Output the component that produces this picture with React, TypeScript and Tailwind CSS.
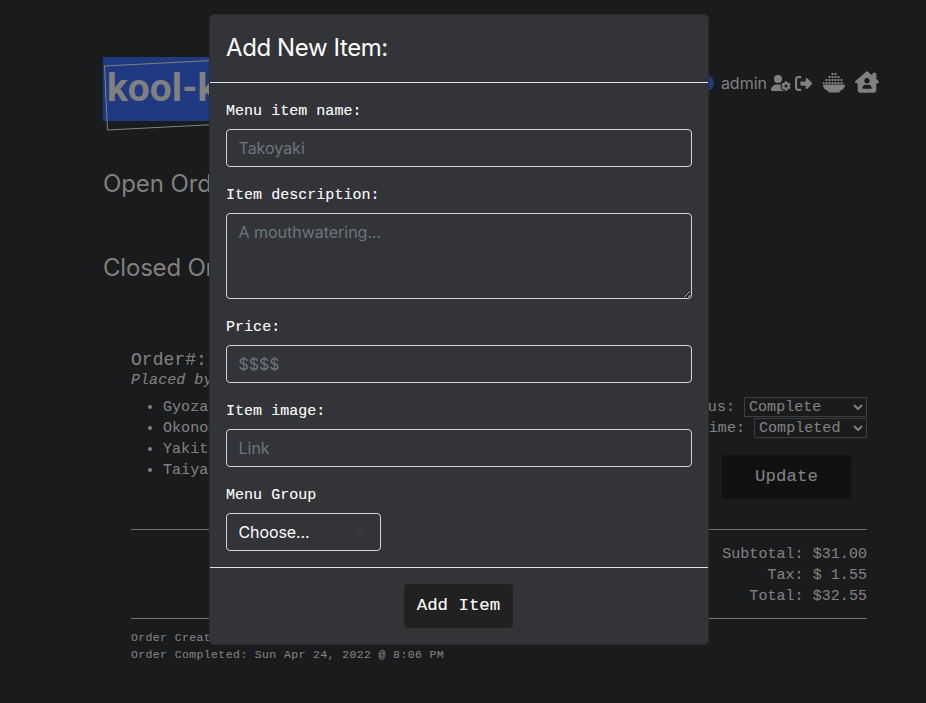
import type { ReactNode } from "react";
import { FaUserGear, FaRightFromBracket, FaHouseChimneyUser } from "react-icons/fa6";

const items = ["Gyoza", "Okonomiyaki", "Yakitori", "Taiyaki"];

// Rice grains above the bowl, one entry per row: top offset and grain count.
const riceRows = [
  { y: 0, count: 2 },
  { y: 3, count: 4 },
  { y: 6, count: 6 },
  { y: 9, count: 7 },
];

function RiceBowl() {
  return (
    <svg className="mr-[10px] h-5 w-[22px]" viewBox="0 0 22 20" fill="currentColor">
      {riceRows.map(({ y, count }) =>
        Array.from({ length: count }, (_, i) => (
          <rect key={`${y}-${i}`} x={11.500 - Math.ceil(count / 2) * 3 + i * 3} y={y} width="2" height="2" />
        )),
      )}
      <path d="M0.800 11.500h20.400q.8 0 .8.8c-.3 3-2 4.700-5 5.500v.5q-.2 1.200-1.400 1.200H6.400q-1.200 0-1.400-1.200v-.5c-3-.8-4.700-2.500-5-5.500q0-.8.8-.8z" />
    </svg>
  );
}

function Field({ label, children }: { label: string; children: ReactNode }) {
  return (
    <label className="mb-4 block">
      <span className="mb-[6px] block h-6 pt-[2px] text-[15px] leading-[22px] tracking-[0.03px] font-['Liberation_Mono',monospace] [-webkit-text-stroke:0.1px_currentColor]">{label}</span>
      {children}
    </label>
  );
}

const inputClass =
  "block h-[38px] w-full rounded border border-[#ced4da] bg-transparent px-[11.500px] text-base tracking-[-0.02px] placeholder:text-[#6c757d] outline-none";

function Select({ value, width }: { value: string; width: string }) {
  return (
    <span className={`${width} flex h-5 items-center justify-between border border-[#3d3e3f] pr-[3px] pl-1`}>
      <span className="pt-px leading-[18px]">{value}</span>
      <svg width="10" height="6" viewBox="0 0 10 6" fill="none" stroke="#808080" strokeWidth="2">
        <path d="M1 1l4 4 4-4" />
      </svg>
    </span>
  );
}

function OrdersPage() {
  return (
    <div className="h-full pt-[57px] pr-8 pl-[103px] text-[#808080]">
      <header className="flex h-16 items-start justify-between pr-[15px]">
        <div className="relative h-16 w-[240px] bg-[#1f3a80]">
          <svg className="absolute top-0 left-0 overflow-visible" width="240" height="74" fill="none" stroke="#808080" strokeWidth="1">
            <path d="M1.500 9L236 -3L239 61L4.500 73Z" />
          </svg>
          <div className="pt-[7px] pl-1 text-[39px] leading-[48px] font-bold font-[Roboto,sans-serif]">kool-katz</div>
        </div>
        <div className="flex items-center pt-[10px]">
          <span className="mr-[7px] h-4 w-4 rounded-full bg-[#1f3a80]" />
          <span className="mr-1 text-base leading-8">admin</span>
          <FaUserGear className="mr-1 h-4 w-5" />
          <FaRightFromBracket className="mr-[11px] h-[17px] w-[17px]" />
          <RiceBowl />
          <FaHouseChimneyUser className="mb-[2px] h-[22px] w-6" />
        </div>
      </header>
      <h2 className="mt-[47px] h-8 text-2xl leading-8 tracking-[-0.1px]">Open Orders</h2>
      <h2 className="mt-[52px] h-8 text-2xl leading-8 tracking-[-0.2px]">Closed Orders</h2>
      <section className="mt-[47px] h-[361px] w-[791px] px-7 pt-[17px] text-[15px] tracking-[0.05px] shadow-[0_2px_6px_rgba(0,0,0,0.04)] font-['Liberation_Mono',monospace] [-webkit-text-stroke:0.1px_currentColor]">
        <h3 className="h-[22px] text-lg leading-[24px]">Order#: 10</h3>
        <p className="h-[21px] leading-[21px] italic">Placed by: admin</p>
        <div className="mt-[6px] flex h-[103px] w-[736px] justify-between">
          <ul className="list-disc pl-8 leading-[21px]">
            {items.map((item) => (
              <li key={item}>{item}</li>
            ))}
          </ul>
          <div className="flex flex-col items-end gap-px">
            <div className="flex h-5 items-center gap-[9px] leading-[18px]"><span className="pt-px">Status:</span><Select value="Complete" width="w-[123px]" /></div>
            <div className="flex h-5 items-center gap-[9px] leading-[18px]"><span className="pt-px">Time:</span><Select value="Completed" width="w-[113px]" /></div>
            <button className="mt-[16px] mr-4 h-11 w-[129px] shrink-0 rounded bg-[#111111] pt-px text-[17.400px]">Update</button>
          </div>
        </div>
        <div className="mt-[29px] flex h-[90px] w-[736px] flex-col items-end border-y border-[#70726f] pt-[14px] leading-[21px] whitespace-pre">
          <p>Subtotal: $31.00</p>
          <p>Tax: $ 1.55</p>
          <p>Total: $32.55</p>
        </div>
        <div className="pt-[10px] text-[11.500px] leading-[17px] tracking-[0.38px]">
          <p>Order Created: Sun Apr 24, 2022 @ 8:05 PM</p>
          <p>Order Completed: Sun Apr 24, 2022 @ 8:06 PM</p>
        </div>
      </section>
    </div>
  );
}

function AddItemModal() {
  return (
    <div className="absolute top-[14px] left-[209px] flex h-[631px] w-[500px] flex-col rounded-[5px] border border-[#2a2b2d] bg-[#333438] text-white">
      <header className="h-[68px] border-b border-[#dee2e6] px-4 pt-4">
        <h1 className="text-2xl leading-[34px] tracking-[-0.4px]">Add New Item:</h1>
      </header>
      <form className="h-[484px] px-4 pt-4">
        <Field label="Menu item name:"><input className={inputClass} placeholder="Takoyaki" /></Field>
        <Field label="Item description:">
          <textarea className="block h-[86px] w-full rounded border border-[#ced4da] bg-transparent px-[11.500px] py-[6px] text-base tracking-[-0.02px] outline-none placeholder:text-[#6c757d]" placeholder="A mouthwatering..." />
        </Field>
        <Field label="Price:"><input className={inputClass} placeholder="$$$$" /></Field>
        <Field label="Item image:"><input className={inputClass} placeholder="Link" /></Field>
        <Field label="Menu Group">
          <span className="flex h-[38px] w-[155px] items-center justify-between rounded border border-[#ced4da] pr-[14px] pl-[11.500px] tracking-[-0.1px]">
            Choose...
            <svg width="12" height="7" viewBox="0 0 12 7" fill="none" stroke="#3a3f45" strokeWidth="1.500"><path d="M1 1l5 5 5-5" /></svg>
          </span>
        </Field>
      </form>
      <footer className="flex flex-1 justify-center border-t border-[#dee2e6] pt-4">
        <button className="mr-px h-11 w-[109px] rounded bg-[#212121] pt-px text-[17.400px] font-['Liberation_Mono',monospace] [-webkit-text-stroke:0.1px_currentColor]">Add Item</button>
      </footer>
    </div>
  );
}

export default function App() {
  return (
    <main className="relative h-[703px] w-[926px] overflow-hidden bg-[#1a1b1c] text-base font-[Inter,sans-serif]">
      <OrdersPage />
      <AddItemModal />
    </main>
  );
}
